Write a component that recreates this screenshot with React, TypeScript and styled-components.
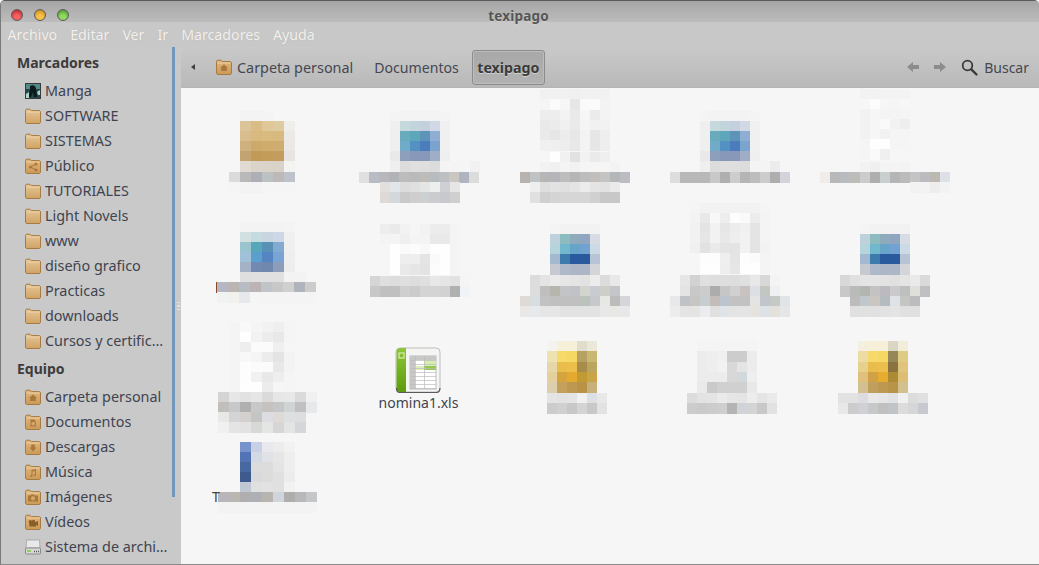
import { createGlobalStyle, styled } from "styled-components";

const GlobalStyle = createGlobalStyle`
  html, body {
    margin: 0;
    padding: 0;
    background: #f6f6f6;
  }
  body {
    font-family: "Noto Sans", "Liberation Sans", sans-serif;
    overflow: hidden;
  }
`;

const Win = styled.div`
  width: 1039px;
  height: 565px;
  box-sizing: border-box;
  display: flex;
  flex-direction: column;
  overflow: hidden;
  border-top: 1px solid #5a5a5a;
  border-left: 1px solid #7a7a7a;
  border-bottom: 1px solid #8a8a8a;
  border-radius: 5px 5px 0 0;
  background: #c9c9c9;
`;

const TitleBar = styled.div`
  position: relative;
  height: 21px;
  flex: none;
  display: flex;
  align-items: center;
  justify-content: center;
  background: linear-gradient(#a6a6a6, #bcbcbc);
`;

const Lights = styled.div`
  position: absolute;
  left: 10px;
  top: 8px;
  display: flex;
  gap: 11px;
`;

const Light = styled.span<{ $c: string; $d: string }>`
  width: 12px;
  height: 12px;
  border-radius: 50%;
  border: 1px solid #5c5c5c;
  box-sizing: border-box;
  background: radial-gradient(circle at 50% 75%, ${(p) => p.$c} 30%, ${(p) => p.$d} 100%);
`;

const Title = styled.div`
  font-size: 13.5px;
  font-weight: 700;
  color: #565656;
  text-shadow: 0 1px 0 #d0d0d0;
  letter-spacing: 0.2px;
  margin-left: -3px;
  margin-top: 9px;
`;

const MenuBar = styled.div`
  height: 25px;
  flex: none;
  display: flex;
  align-items: center;
  background: #c8c8c8;
`;

const MenuItem = styled.span`
  padding: 0 6.5px;
  font-size: 14.2px;
  color: #f3f0ec;
  text-shadow: 0 0 1px #b0b0b0;
`;

const Body = styled.div`
  flex: 1;
  display: flex;
  min-height: 0;
`;

const Sidebar = styled.div`
  position: relative;
  width: 180px;
  flex: none;
  background: #c9c9c9;
  overflow: hidden;
`;

const ScrollThumb = styled.div`
  position: absolute;
  left: 171px;
  top: 0;
  width: 3px;
  height: 450px;
  background: #7299bd;
`;

const Grip = styled.div`
  position: absolute;
  left: 176px;
  top: 255px;
  width: 3px;
  height: 6px;
  border-top: 1px solid #e4e4e4;
  border-bottom: 1px solid #e4e4e4;
  background: linear-gradient(#c9c9c9 40%, #e4e4e4 40%, #e4e4e4 60%, #c9c9c9 60%);
`;

const Heading = styled.div`
  height: 31px;
  box-sizing: border-box;
  padding: 0 0 0 16px;
  display: flex;
  align-items: center;
  font-size: 14px;
  font-weight: 700;
  color: #3c3c3c;
`;

const Row = styled.div`
  height: 25px;
  width: 171px;
  display: flex;
  align-items: center;
  gap: 4px;
  padding-left: 24px;
  box-sizing: border-box;
`;

const RowLabel = styled.span`
  font-size: 14.4px;
  color: #3f4450;
  white-space: nowrap;
  overflow: hidden;
`;

const Main = styled.div`
  flex: 1;
  display: flex;
  flex-direction: column;
  min-width: 0;
`;

const Toolbar = styled.div`
  height: 41px;
  flex: none;
  display: flex;
  align-items: center;
  padding: 0 10px 0 9px;
  background: linear-gradient(#c9c9c9, #b9b9b9);
  border-bottom: 1px solid #b4b4b4;
  box-sizing: border-box;
`;

const Crumb = styled.div<{ $gapAfter: number; $size: number }>`
  display: flex;
  align-items: center;
  gap: 5px;
  font-size: ${(p) => p.$size}px;
  color: #444852;
  margin-right: ${(p) => p.$gapAfter}px;
`;

const ActiveCrumb = styled.div`
  height: 35px;
  width: 73px;
  box-sizing: border-box;
  display: flex;
  align-items: center;
  justify-content: center;
  border: 1px solid #8c8c8c;
  border-radius: 3px;
  background: linear-gradient(#a8a8a8, #b2b2b2);
  box-shadow: inset 0 0 0 1px #bcbcbc;
  font-size: 14.2px;
  font-weight: 700;
  color: #3a3a3a;
  text-shadow: 0 1px 0 #d4d4d4;
`;

const BackArrow = styled.svg`
  margin-right: 20px;
`;

const Spacer = styled.div`
  flex: 1;
`;

const NavIcons = styled.div`
  display: flex;
  align-items: center;
  gap: 15px;
  margin-right: 15px;
`;

const SearchBtn = styled.div`
  display: flex;
  align-items: center;
  gap: 6px;
  font-size: 14px;
  color: #444852;
`;

const Files = styled.div`
  flex: 1;
  background: #f6f6f6;
  padding-left: 4px;
  display: grid;
  grid-template-columns: repeat(5, 155px);
  grid-template-rows: 115px 115px 114px 1fr;
`;

const FileTile = styled.div`
  display: flex;
  flex-direction: column;
  align-items: center;
  padding-top: 29px;
  box-sizing: border-box;
`;

const FileName = styled.span`
  font-size: 14px;
  line-height: 19px;
  margin-left: 2px;
  color: #3f4450;
`;

const BlurTile = styled.svg`
  display: block;
  width: 155px;
  overflow: visible;
  shape-rendering: crispEdges;
  & > g {
    filter: blur(0.6px);
  }
`;

const SmallT = styled.text`
  font-size: 14px;
  fill: #4a4438;
  font-family: "Noto Sans", sans-serif;
`;

const IconSvg = styled.svg`
  flex: none;
`;

type Emblem = "home" | "doc" | "down" | "music" | "pic" | "video" | "share";

const EMBLEM = "#a9773a";

function Folder({ emblem }: { emblem?: Emblem }) {
  const top = emblem ? "#e0b67c" : "#e6c797";
  const bottom = emblem ? "#cb9a58" : "#cfa366";
  const gid = emblem ? "folderDark" : "folderLight";
  return (
    <IconSvg width="16" height="16" viewBox="0 0 16 16">
      <defs>
        <linearGradient id={gid} x1="0" y1="0" x2="0" y2="1">
          <stop offset="0" stopColor={top} />
          <stop offset="1" stopColor={bottom} />
        </linearGradient>
      </defs>
      <path d="M0.5 2.5 C0.5 1.7 1 1.2 1.8 1.2 H5 L6.3 2.6 H14 C14.9 2.6 15.5 3.2 15.5 4 V14 C15.5 14.8 14.9 15.5 14 15.5 H2 C1.1 15.5 0.5 14.8 0.5 14 Z" fill={`url(#${gid})`} stroke="#a67a40" />
      <path d="M1.3 4 H14.7" stroke="#f0d9b4" strokeWidth="0.8" fill="none" />
      {emblem === "home" && <path d="M8 5.5 L12 9 H10.8 V12 H5.2 V9 H4 Z" fill={EMBLEM} />}
      {emblem === "doc" && <path d="M5.5 5.5 H9 L10.8 7.3 V12.5 H5.5 Z M6.5 8 V11.5 H9.8 V8 Z" fill={EMBLEM} fillRule="evenodd" />}
      {emblem === "down" && <path d="M6.3 5.5 H9.7 V8.5 H11.5 L8 12.5 L4.5 8.5 H6.3 Z" fill={EMBLEM} />}
      {emblem === "music" && (
        <path d="M6.5 6 L11 5 V11 C11 12 9 12.4 8.8 11.3 C8.7 10.5 9.8 10 10 10.2 V7 L7.5 7.5 V12 C7.5 13 5.5 13.3 5.3 12.3 C5.2 11.5 6.2 11 6.5 11.1 Z" fill={EMBLEM} />
      )}
      {emblem === "pic" && (
        <path d="M3 6.5 H5.5 L6.3 5.5 H9 L9.8 6.5 H13 V12.5 H3 Z M8 7.3 A2.1 2.1 0 1 0 8.01 7.3 Z" fill={EMBLEM} fillRule="evenodd" />
      )}
      {emblem === "video" && (
        <path d="M4 8.5 A1.6 1.6 0 1 1 7 7.8 A1.6 1.6 0 1 1 10 8 H11 L13 7 V12 L11 11 V12.5 H4.5 Z" fill="#8a5e28" />
      )}
      {emblem === "share" && (
        <g fill={EMBLEM}>
          <path d="M11 6 L5.5 9 L11 12" stroke={EMBLEM} strokeWidth="1" fill="none" />
          <circle cx="11" cy="6" r="1.5" />
          <circle cx="5.5" cy="9" r="1.5" />
          <circle cx="11" cy="12" r="1.5" />
        </g>
      )}
    </IconSvg>
  );
}

function MangaThumb() {
  return (
    <IconSvg width="16" height="16" viewBox="0 0 16 16">
      <rect x="0.5" y="0.5" width="15" height="15" fill="#24464a" stroke="#3a3a3a" />
      <rect x="1" y="1" width="14" height="5" fill="#4f8b88" />
      <path d="M5 3 C8 1 11 3 11 6 L12 14 H9 L8 9 L6 14 H3 L5 7 Z" fill="#0f1a1c" />
      <path d="M1 11 L4 9 L4 15 H1 Z M12 9 L15 7 V12 H13 Z" fill="#a8d4cc" />
    </IconSvg>
  );
}

function DriveIcon() {
  return (
    <IconSvg width="16" height="16" viewBox="0 0 16 16">
      <path d="M1.5 1 H14.5 L15 9 H1 Z" fill="#e8e8e8" stroke="#9a9a9a" strokeWidth="0.7" />
      <rect x="0.5" y="9" width="15" height="6" rx="1" fill="#d8d8d8" stroke="#8a8a8a" />
      <rect x="2" y="11" width="4" height="2" fill="#8fcf5a" />
      <path d="M9 12.5 H14" stroke="#555" strokeDasharray="1 1" strokeWidth="1.5" />
    </IconSvg>
  );
}

function SpreadsheetIcon() {
  const rows = [0, 1, 2, 3, 4, 5, 6, 7];
  return (
    <IconSvg width="46" height="46" viewBox="0 0 46 46">
      <defs>
        <linearGradient id="sheetSpine" x1="0" y1="0" x2="0" y2="1">
          <stop offset="0" stopColor="#8cc63a" />
          <stop offset="1" stopColor="#5c9c08" />
        </linearGradient>
      </defs>
      <rect x="1" y="1" width="44" height="44" rx="4" fill="#f5f5f3" stroke="#bdbdbd" />
      <path d="M1.5 5 C1.5 2.5 3 1 5 1 H11 V45 H5 C3 45 1.5 43.5 1.5 41 Z" fill="url(#sheetSpine)" />
      <path d="M1.5 41 C1.5 44 3 45.5 5 45.5 H41 C43.5 45.5 45 44 45 41" fill="none" stroke="#5a5a5a" strokeWidth="1.2" />
      <rect x="4" y="6" width="5" height="5" fill="none" stroke="#cfe59a" strokeWidth="1.4" />
      <rect x="15" y="9" width="26" height="33" fill="#ffffff" stroke="#bcbcbc" />
      <rect x="15" y="9" width="26" height="4" fill="#c8c8c8" />
      <rect x="15" y="9" width="5" height="33" fill="#c8c8c8" />
      <rect x="20" y="19" width="10" height="4" fill="#dcefb8" />
      <rect x="29" y="13" width="12" height="6" fill="#d8eeb0" />
      <rect x="29" y="19" width="12" height="4" fill="#94c850" />
      {rows.map((r) => (
        <path key={r} d={`M15 ${13 + r * 4 + 0.5} H41`} stroke="#bcbcbc" strokeWidth="0.7" />
      ))}
      <path d="M29.5 9 V42 M20.5 9 V42" stroke="#bcbcbc" strokeWidth="0.7" />
    </IconSvg>
  );
}

// a strip of mosaic cells: x, y in page pixels, cell width, colours.
// two-digit tokens are greys (ee -> #eeeeee), six-digit ones plain hex
type Strip = [number, number, number, string];

const expand = (t: string) => (t.length === 2 ? `#${t}${t}${t}` : `#${t}`);

const blue1: Strip[] = [
  [390, 121, 10, "ef c6d9dd c2d5dc c4d0de d1d9e6 f0"],
  [390, 131, 10, "ef 69abbc 5ea6ba 5f94b9 8eafd3 f0"],
  [390, 141, 10, "ef 70abc7 5291c1 4b7dbd 7aa3cd f0"],
  [390, 151, 10, "e9 8e9fbc 8798b8 8898ba a0adc7 ef"],
  [390, 161, 10, "ef dc df de dc f4 f4 f3f5f7 f1"],
];

const shiftX = (strips: Strip[], dx: number): Strip[] =>
  strips.map(([x, y, w, c]) => [x + dx, y, w, c]);

const blue2: Strip[] = [
  [550, 224, 10, "f4 f2 f2 f2 f2"],
  [550, 234, 10, "bdd2da 8dbcc0 8eabbc 8fa5c0 d6dbe4"],
  [550, 244, 10, "b6d4dc 71b8cc 66a5c7 72a2d1 ccdae6"],
  [550, 254, 10, "a2b9cf 3c7bab 2a5a9e 2b5a9c b8c3d6"],
  [550, 264, 10, "c6c9d0 b0b9c9 adb6c7 adb6c7 d4d5d8"],
];

type Thumb = { col: number; row: number; strips: Strip[]; letter?: boolean };

const thumbs: Thumb[] = [
  {
    col: 0,
    row: 0,
    strips: [
      [240, 111, 11, "f3 f3 f4"],
      [240, 121, 11, "dcc49a dcbc85 dfc797 decba0 f0eeeb"],
      [240, 131, 11, "d9bd8e d8b97e d9bb80 d8b97f eceae7"],
      [240, 141, 11, "cfb07f cdaa6c cfab6c cfac70 ebe8e5"],
      [240, 151, 11, "c3a36f c29a58 c49c5a c49d5e e8e4e1"],
      [240, 161, 11, "e0dad3 dad4ca d9d3c9 d8d2c8 f3f3f2"],
      [229, 172, 11, "db b9 adaeb6 bcc1c1 bdb9b9 bdc2cb"],
      [229, 182, 11, "f5 f3 f1f3f5 f5 f5 f5"],
    ],
  },
  {
    col: 1,
    row: 0,
    strips: [
      [390, 111, 10, "f4 f3 f3 f3 f3 f4"],
      ...blue1,
      [359, 172, 10, "e0 b9bcc4 b8b8bc b2b3b7 bcbcba b9bbbb bdbcb9 b7bcc0 bdbfc0 cac6c0 afb5c0 dc"],
      [380, 182, 10, "e2dfdd e2e6e8 dc df e4e6e6 eeeeec cfd0d3 e6"],
      [380, 192, 10, "ddd9d6 d3d8da ca d0cdcd cdd0d0 ccccce c8c9cf cf"],
    ],
  },
  {
    col: 2,
    row: 0,
    strips: [
      [540, 89, 10, "f1 f1 f1 f0 f1 f1 f1"],
      [540, 99, 10, "f5 fb f6 e6 fa fb f3"],
      [540, 110, 10, "ed ed f3 e9 f6 eb f3"],
      [540, 120, 10, "e9 eb f0 ea f4 f1 f2"],
      [540, 130, 10, "ea e6 ec e7 f3 e6 ee"],
      [540, 140, 10, "f0 ef ed e8 f3 e6 ee"],
      [540, 152, 10, "f6 fe f1 e2 f2 ea ef"],
      [540, 162, 10, "f2 f0 f4 f2 f5 f5 f5 f3"],
      [520, 172, 10, "b9b3b0 c0c3c3 b6 b5b6ba bcbebc b6 bcbebe c1bebb c4 b4b7b7 bcbdc2"],
      [530, 182, 10, "ee de e2 e0 e4 ec e4 e2 ea"],
      [530, 192, 10, "e0 d0 d4 d6 d6 d6 d0 c8 c8"],
    ],
  },
  {
    col: 3,
    row: 0,
    strips: [
      [700, 111, 10, "f4 f3 f3 f3 f3 f4"],
      ...shiftX(blue1.slice(0, 4), 310),
      [700, 161, 10, "ef dc df de dc f4 f4 ec"],
      [670, 172, 10, "dd b8 b8 b8 c8 af cd b5 bd cc ae d3d3dc"],
    ],
  },
  {
    col: 4,
    row: 0,
    strips: [
      [860, 89, 10, "f2 f2 f3 f3 f3"],
      [860, 99, 10, "f7 fc f6 f5 f7"],
      [860, 109, 10, "f2 f6 f4 f4 f5"],
      [860, 119, 10, "f2 f6 f9 f2 ee"],
      [860, 129, 10, "f2 f6 f2 f5 f5"],
      [860, 139, 10, "f5 fe fe f5 f5"],
      [860, 149, 10, "f5 fa ef f6 f6"],
      [860, 162, 10, "f2 ef f4 f4 f3"],
      [820, 172, 10, "f0ecea b8 b8bcc0 bebcb8 cc ae c9cece b5 bb c4 bcbcc0 bcb9b3 dde0e6"],
      [910, 182, 10, "f2 f3 ed f3"],
    ],
  },
  {
    col: 0,
    row: 1,
    strips: [
      [240, 222, 11, "f3 f3 f3 f3 f4"],
      [240, 232, 11, "d1e0e1 c4dcdf c9d5e0 cdd7e6 f0"],
      [240, 242, 11, "9cc4ce 56a7ba 5891b5 83aad1 ef"],
      [240, 252, 11, "a1c1d8 5c9fcd 5485c2 78a3d3 ee"],
      [240, 262, 11, "a4b1c6 7289b1 7088ae 8c9dbb ed"],
      [240, 272, 11, "df e0 e0 e0 f3 f3"],
      [216, 282, 1, "8a4b2a"],
      [217, 282, 11, "b5b8c4 bab4b2 b7bcc2 bcb4b4 c0c4c8 c8 d0 b0b4bc cc"],
      [217, 292, 11, "f1f3f3 f3f1ee e7e8ec f5 f4 f4 f4 f4 f4"],
    ],
  },
  {
    col: 1,
    row: 1,
    strips: [
      [380, 224, 10, "ed ea f2 f5 f2 ec ec f4"],
      [380, 234, 10, "f4 f4 ef f4 f4 e9 e9 f4"],
      [380, 244, 10, "f6 fe fa fc f8 fe fe f4"],
      [380, 254, 10, "f6 fe ee ee e4 fa fe f4"],
      [380, 264, 10, "f6 fe e9 e6 e3 fc fe f4"],
      [370, 276, 10, "d5 df dd df dd df e8 e5 e2 f5"],
      [370, 286, 10, "c8 c0 c0 cf cb d4 d4 d2 b0 f0f4f8"],
    ],
  },
  {
    col: 2,
    row: 1,
    strips: [
      ...blue2,
      [530, 275, 10, "dc e4 ea e6 e4 e2 ec dc e8"],
      [530, 286, 10, "dd bf b6b6ae c2c4c6 c0c2c8 d3d4ce c8cbd0 cdcec8 c4c6c9"],
      [520, 296, 10, "e0dad6 d8dee0 c0c2c4 c0 c0 c0 bcc2bc c6c8cc e6e8e4 bc d4d6da"],
      [520, 306, 10, "eae8e6 e6eaec e6 e6 e2 e2 e2 e2 e8 e8e8e4 e6e8ea"],
    ],
  },
  {
    col: 3,
    row: 1,
    strips: [
      [690, 203, 10, "f5 f2 f2 f2 f2 f2 f2 f5"],
      [690, 213, 10, "f3 e8 f8 ed fd fa ec f4"],
      [690, 223, 10, "f2 e4 f2 e6 ec f0 e4 f4"],
      [690, 233, 10, "f2 e6 f2 e8 ee f2 e4 f4"],
      [690, 243, 10, "f0 e2 ea e4 e4 f2 e4 f2"],
      [690, 253, 10, "f6 fd fd ef e4 fd fb f4"],
      [690, 263, 10, "f6 fe fe ee e6 fe fe f4"],
      [680, 275, 10, "e6 d2 e0 de de dd e0 e8 d8 f4"],
      [680, 286, 10, "e4 c8 cc ac c6 d0 c8c2c0 dce0e4 c4c6c2 eef0f2"],
      [670, 296, 10, "e8 bfc2c6 c8c6c2 c6ced0 c4bcb8 bcc4ce c2 c2 e6e4e2 c2c6cc c6cac6 e0e4e6"],
      [670, 306, 10, "ec e4 e4 eaecf0 e0 e0e4e8 e4 e4 e6e2de dce2e6 e4e0dc e4e6e8"],
    ],
  },
  {
    col: 4,
    row: 1,
    strips: [
      ...shiftX(blue2, 310),
      [840, 275, 10, "d8 e0 e4 e4 e2 e0 e4 ea da"],
      [840, 286, 10, "c8 ba b2b6b0 c4c2c2 bcbac0 ca bec0c0 e0e0da c0c0c2"],
      [850, 296, 10, "bc c0c8cc cac6c2 b4bcc0 dfe2e6 c4c6c4 bcbcbe"],
      [850, 306, 10, "e0 e0e2e0 e0 e2 e4 e0 e0"],
    ],
  },
  {
    col: 0,
    row: 2,
    strips: [
      [229, 322, 11, "f4 f8 f5 f2 ef f5"],
      [229, 332, 11, "f4 fe f2 ec e8 f5"],
      [229, 342, 11, "f4 ee fb fb ef f6"],
      [229, 352, 11, "f4 f8 f5 ec e4 f3"],
      [229, 362, 11, "f4 fd fb fb e8 f3"],
      [229, 372, 11, "f4 fd f1 e8 ee f5"],
      [229, 382, 11, "f4 fe fe ec f6 f5"],
      [218, 392, 11, "d4 e6 e2 e6 da e6 e8 da f0"],
      [218, 402, 11, "c2bebc c6c8cc b0 c8 c6c2c0 c4c6c8 d0d4d4 c0c0c4 e6e8ea"],
      [218, 412, 11, "e8e8e6 d2d4d6 d4d0ce c4c6c6 dcdce2 dedad8 dce0e0 dcdee0"],
      [218, 422, 11, "f0 e4 e2 d8 e4e6e4 d6 e4 d4d6da"],
    ],
  },
  {
    col: 2,
    row: 2,
    strips: [
      [547, 341, 10, "f5f3ee f6f0d8 f6f0d8 e0ddcc ebe8d8"],
      [547, 351, 10, "ede2b0 f5d96a f5d864 b5a263 c9b873"],
      [547, 362, 10, "e6d7a8 e9bc4c ecbf4c a88c4c bba65f"],
      [547, 372, 10, "e4d09c d4a53e e3a930 c09a32 c9a548"],
      [547, 382, 10, "dccfae c3a05c bc9850 ba9246 c8b07c"],
      [547, 393, 10, "e4 e2 e4 f0 dce0e4 e8"],
      [547, 403, 10, "cc d0 c8 d4 c8 e2"],
    ],
  },
  {
    col: 3,
    row: 2,
    strips: [
      [697, 341, 10, "f4 f4 f4 f4 f4 f4"],
      [697, 351, 10, "ec ee f0 cc cc ec"],
      [697, 362, 10, "ec ee f2 d8 e4 ec"],
      [697, 372, 10, "ec ec ec d8 d0d8dc ee"],
      [697, 382, 10, "ea ca d0 d0 d0 e8"],
      [687, 393, 10, "dc e2 e4 ea e6 e4 ec e4 ea"],
      [687, 403, 10, "cc ca cc ce b4 d0d4d8 d4 c8 e2"],
    ],
  },
  {
    col: 4,
    row: 2,
    strips: [
      [858, 341, 10, "f3f0e0 f6f0d8 f6f0d8 dad6c4 f2ecda"],
      [858, 351, 10, "ecdca4 f5d96a f5d864 958757 e0cb82"],
      [858, 362, 10, "e6d08e e9bc4c ecbf4c 8a7340 e0c47e"],
      [858, 372, 10, "e0c07c d0a248 e6ac30 ad8a34 dcbd74"],
      [858, 382, 10, "d2c090 c09e5c bc9850 b89448 d2c08e"],
      [838, 393, 10, "e2 e2 dcdce0 e8 e6 e2 f0 dc e0"],
      [838, 403, 10, "e8 cc cfd1d6 c6c8ca c0 c0c4c6 dc d4d6d8 c8c8d0"],
    ],
  },
  {
    col: 0,
    row: 3,
    letter: true,
    strips: [
      [240, 442, 11, "7892cc c8d1e4 e8e8ee ec f2"],
      [240, 452, 11, "5273b5 d3dae6 e0e2e8 e6 ee"],
      [240, 462, 11, "47699f dc dc e4 ee"],
      [240, 472, 11, "3f5a8c d8dadc dcdcda e0 ec"],
      [240, 482, 11, "c0c8d4 e0 e2 e0 f2"],
      [218, 492, 11, "b8b6ba bab6b2 b0aeae aeb0b6 b8b4b0 d0d4dc b0aeac b8b8bc c4c6c8"],
      [218, 502, 11, "f3 f3 f3 f3 f3 f3 f3 f3 f3"],
    ],
  },
];

const colLeft = [185, 340, 495, 650, 805];
const rowTop = [88, 203, 318, 432];
const rowHeight = [115, 115, 114, 133];

function Mosaic({ thumb }: { thumb: Thumb }) {
  const x0 = colLeft[thumb.col];
  const y0 = rowTop[thumb.row];
  const h = rowHeight[thumb.row];
  return (
    <BlurTile viewBox={`${x0} ${y0} 155 ${h}`} height={h}>
      <g>
        {thumb.strips.map(([x, y, w, colours]) =>
          colours.split(" ").map((c, i) => (
            <rect key={`${x}-${y}-${i}`} x={x + i * w} y={y} width={w} height={11} fill={expand(c)} />
          )),
        )}
      </g>
      {thumb.letter && (
        <SmallT x={212} y={502}>
          T
        </SmallT>
      )}
    </BlurTile>
  );
}

const bookmarks: { name: string; icon?: Emblem; manga?: boolean }[] = [
  { name: "Manga", manga: true },
  { name: "SOFTWARE" },
  { name: "SISTEMAS" },
  { name: "Público", icon: "share" },
  { name: "TUTORIALES" },
  { name: "Light Novels" },
  { name: "www" },
  { name: "diseño grafico" },
  { name: "Practicas" },
  { name: "downloads" },
  { name: "Cursos y certific…" },
];

const places: { name: string; icon: Emblem }[] = [
  { name: "Carpeta personal", icon: "home" },
  { name: "Documentos", icon: "doc" },
  { name: "Descargas", icon: "down" },
  { name: "Música", icon: "music" },
  { name: "Imágenes", icon: "pic" },
  { name: "Vídeos", icon: "video" },
];

const menus = ["Archivo", "Editar", "Ver", "Ir", "Marcadores", "Ayuda"];

function App() {
  const cells: (Thumb | null)[] = [];
  for (let r = 0; r < 4; r++) {
    for (let c = 0; c < 5; c++) {
      cells.push(thumbs.find((t) => t.col === c && t.row === r) ?? null);
    }
  }

  return (
    <>
      <GlobalStyle />
      <Win>
        <TitleBar>
          <Lights>
            <Light $c="#f56060" $d="#b01c1c" />
            <Light $c="#f8c048" $d="#c07c10" />
            <Light $c="#90d860" $d="#3c8820" />
          </Lights>
          <Title>texipago</Title>
        </TitleBar>
        <MenuBar>
          {menus.map((m) => (
            <MenuItem key={m}>{m}</MenuItem>
          ))}
        </MenuBar>
        <Body>
          <Sidebar>
            <Heading>Marcadores</Heading>
            {bookmarks.map((b) => (
              <Row key={b.name}>
                {b.manga ? <MangaThumb /> : <Folder emblem={b.icon} />}
                <RowLabel>{b.name}</RowLabel>
              </Row>
            ))}
            <Heading>Equipo</Heading>
            {places.map((p) => (
              <Row key={p.name}>
                <Folder emblem={p.icon} />
                <RowLabel>{p.name}</RowLabel>
              </Row>
            ))}
            <Row>
              <DriveIcon />
              <RowLabel>Sistema de archi…</RowLabel>
            </Row>
            <ScrollThumb />
            <Grip />
          </Sidebar>
          <Main>
            <Toolbar>
              <BackArrow width="6" height="8" viewBox="0 0 6 8">
                <path d="M1 4 L5 1 V7 Z" fill="#3f3f3f" />
              </BackArrow>
              <Crumb $gapAfter={21} $size={14.4}>
                <Folder emblem="home" />
                Carpeta personal
              </Crumb>
              <Crumb $gapAfter={13} $size={14.1}>Documentos</Crumb>
              <ActiveCrumb>texipago</ActiveCrumb>
              <Spacer />
              <NavIcons>
                <svg width="12" height="10" viewBox="0 0 12 10">
                  <path d="M0 5 L6 0 V3 H12 V7 H6 V10 Z" fill="#8c8c8c" />
                </svg>
                <svg width="12" height="10" viewBox="0 0 12 10">
                  <path d="M12 5 L6 0 V3 H0 V7 H6 V10 Z" fill="#8c8c8c" />
                </svg>
              </NavIcons>
              <SearchBtn>
                <svg width="17" height="17" viewBox="0 0 17 17">
                  <circle cx="6.5" cy="6.5" r="4.8" fill="none" stroke="#3a3a3a" strokeWidth="1.8" />
                  <path d="M10.3 10.3 L15.5 15.5" stroke="#3a3a3a" strokeWidth="2.4" strokeLinecap="round" />
                </svg>
                Buscar
              </SearchBtn>
            </Toolbar>
            <Files>
              {cells.map((t, i) =>
                t ? (
                  <Mosaic key={i} thumb={t} />
                ) : i === 11 ? (
                  <FileTile key={i}>
                    <SpreadsheetIcon />
                    <FileName>nomina1.xls</FileName>
                  </FileTile>
                ) : (
                  <div key={i} />
                ),
              )}
            </Files>
          </Main>
        </Body>
      </Win>
    </>
  );
}

export default App;
